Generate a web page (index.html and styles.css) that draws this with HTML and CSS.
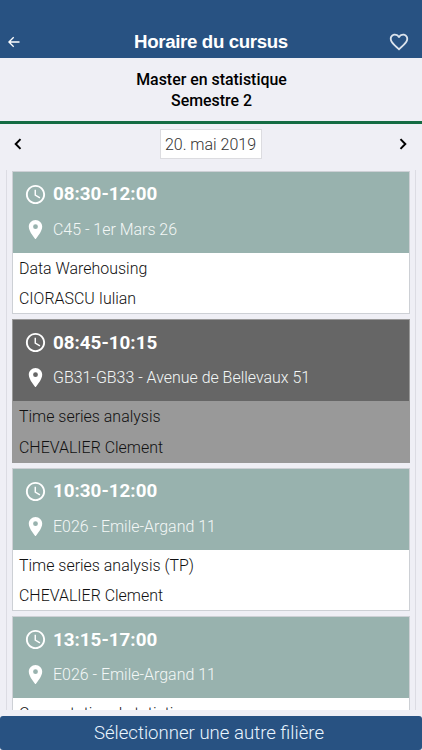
FILE: index.html
```html
<!DOCTYPE html>
<html lang="fr">
<head>
<meta charset="utf-8">
<title>Horaire du cursus</title>
<link rel="stylesheet" href="styles.css">
</head>
<body>
<svg class="defs" width="0" height="0" aria-hidden="true">
  <symbol id="clock" viewBox="0 0 24 24"><path d="M11.99 2C6.47 2 2 6.48 2 12s4.47 10 9.99 10C17.52 22 22 17.52 22 12S17.52 2 11.99 2zM12 20c-4.42 0-8-3.58-8-8s3.58-8 8-8 8 3.58 8 8-3.58 8-8 8zM12.5 7H11v6l5.25 3.15.75-1.23-4.5-2.67z"/></symbol>
  <symbol id="pin" viewBox="0 0 24 24"><path d="M12 2C8.13 2 5 5.13 5 9c0 5.25 7 13 7 13s7-7.75 7-13c0-3.87-3.13-7-7-7zm0 9.500a2.500 2.500 0 1 1 0-5 2.500 2.500 0 0 1 0 5z"/></symbol>
</svg>
<div class="app">
  <header class="topbar">
    <svg class="back" viewBox="0 0 12 12"><path d="M11.500 6H1M5.700 1.200L.9 6l4.800 4.800"/></svg>
    <h1>Horaire du cursus</h1>
    <svg class="heart" viewBox="0 0 24 24"><path d="M16.500 3c-1.740 0-3.410.81-4.500 2.090C10.910 3.810 9.240 3 7.500 3 4.420 3 2 5.420 2 8.500c0 3.780 3.400 6.860 8.550 11.540L12 21.350l1.450-1.320C18.600 15.360 22 12.280 22 8.500 22 5.420 19.580 3 16.500 3zm-4.400 15.550l-.1.100-.1-.1C7.140 14.240 4 11.390 4 8.500 4 6.500 5.500 5 7.500 5c1.540 0 3.040.99 3.570 2.360h1.870C13.460 5.990 14.960 5 16.500 5c2 0 3.500 1.500 3.500 3.500 0 2.890-3.140 5.740-7.900 10.050z"/></svg>
  </header>
  <section class="program">
    <div>Master en statistique</div>
    <div>Semestre 2</div>
  </section>
  <nav class="datebar">
    <svg class="chev" viewBox="0 0 8 12"><path d="M6.500 1.100L1.700 6l4.800 4.900"/></svg>
    <div class="date">20. mai 2019</div>
    <svg class="chev" viewBox="0 0 8 12"><path d="M1.500 1.100L6.300 6l-4.800 4.900"/></svg>
  </nav>
  <main class="list">
    <article class="card">
      <div class="head">
        <div class="row time"><svg><use href="#clock"/></svg><span>08:30-12:00</span></div>
        <div class="row place"><svg><use href="#pin"/></svg><span>C45 - 1er Mars 26</span></div>
      </div>
      <div class="info"><p>Data Warehousing</p><p>CIORASCU Iulian</p></div>
    </article>
    <article class="card past">
      <div class="head">
        <div class="row time"><svg><use href="#clock"/></svg><span>08:45-10:15</span></div>
        <div class="row place"><svg><use href="#pin"/></svg><span>GB31-GB33 - Avenue de Bellevaux 51</span></div>
      </div>
      <div class="info"><p>Time series analysis</p><p>CHEVALIER Clement</p></div>
    </article>
    <article class="card">
      <div class="head">
        <div class="row time"><svg><use href="#clock"/></svg><span>10:30-12:00</span></div>
        <div class="row place"><svg><use href="#pin"/></svg><span>E026 - Emile-Argand 11</span></div>
      </div>
      <div class="info"><p>Time series analysis (TP)</p><p>CHEVALIER Clement</p></div>
    </article>
    <article class="card">
      <div class="head">
        <div class="row time"><svg><use href="#clock"/></svg><span>13:15-17:00</span></div>
        <div class="row place"><svg><use href="#pin"/></svg><span>E026 - Emile-Argand 11</span></div>
      </div>
      <div class="info"><p>Computational statistics</p></div>
    </article>
  </main>
  <button class="choose">Sélectionner une autre filière</button>
</div>
</body>
</html>
```
FILE: styles.css
```css
* { box-sizing: border-box; }
body { margin: 0; background: #efeff5; font-family: Roboto, sans-serif; }
.defs { display: block; }
.app { width: 422px; height: 750px; display: flex; flex-direction: column; overflow: hidden; }
.topbar {
  flex: none; height: 58px; padding: 26px 12px 0 8px; background: #285282; color: #fff;
  display: flex; align-items: center; justify-content: space-between;
}
.topbar h1 { margin: 0 0 0 14px; font: bold 18.700px/32px "Liberation Sans", sans-serif; letter-spacing: -.36px; white-space: nowrap; }
.back { width: 12px; height: 12px; margin-top: -1px; fill: none; stroke: #fff; stroke-width: 1.300; }
.heart { width: 22px; height: 22px; fill: #dce4ed; }
.program {
  flex: none; height: 66px; padding: 11px 0 0 1px; border-bottom: 3px solid #146c43;
  text-align: center; font-weight: 500; font-size: 15.900px; line-height: 21px; color: #000;
}
.datebar {
  flex: none; height: 46px; padding: 5px 15px 0 14px; display: flex;
  justify-content: space-between; align-items: flex-start;
}
.chev { width: 8px; height: 12px; margin-top: 9px; fill: none; stroke: #000; stroke-width: 2; }
.date {
  width: 102px; height: 30px; border: 1px solid #dcdce0; background: #fff; color: #333;
  text-align: center; font-weight: 300; font-size: 16px; line-height: 29px; white-space: nowrap;
}
.list {
  flex: none; height: 540px; margin: 0 6px; padding: .6px 5px 0; overflow: hidden;
  border: solid #dcdce3; border-width: 0 1px;
}
.card { height: 143.600px; margin-bottom: 5px; border: 1px solid #cdd0d5; background: #fff; }
.head { height: 81px; padding: 5px 12px 0 11px; background: #98b2ae; color: #fff; }
.row { height: 35px; display: flex; align-items: center; gap: 6px; white-space: nowrap; }
.row svg { width: 23px; height: 23px; fill: #fff; }
.time { font-size: 18.800px; font-weight: 700; }
.place { font-size: 15.950px; font-weight: 300; color: #f3f7f6; }
.info { padding: 1px 0 0 6px; font-size: 15.950px; font-weight: 300; color: #111; }
.info p { margin: 0; line-height: 30.500px; white-space: nowrap; }
.past { background: #999; border-color: #999; }
.past .head { background: #666; }
.choose {
  flex: none; height: 34px; margin-top: 6px; padding: 0 4px 0 0; border: 0; border-radius: 3px;
  background: #285282; color: #eaf5ff; font: 300 18.600px/34px Roboto, sans-serif;
}
```
